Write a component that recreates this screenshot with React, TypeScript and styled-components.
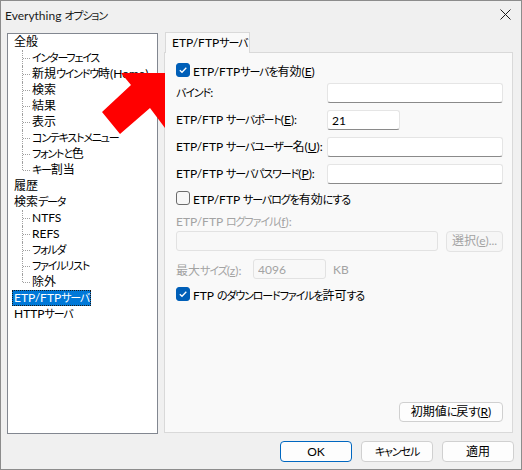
import styled, { createGlobalStyle } from 'styled-components';

const GlobalStyle = createGlobalStyle`
  html, body { margin: 0; padding: 0; background: #f0f0f0; }
  * { box-sizing: border-box; }
`;

const UI_FONT = `Lato, "Noto Sans CJK JP", sans-serif`;

const Window = styled.div`
  position: relative;
  width: 522px;
  height: 470px;
  background: #f0f0f0;
  border: 1px solid #8c8c8c;
  display: flex;
  flex-direction: column;
  font-family: ${UI_FONT};
  font-feature-settings: 'palt';
  font-size: 12px;
  color: #000;
  overflow: hidden;
`;

const TitleBar = styled.div`
  height: 31px;
  display: flex;
  align-items: center;
  justify-content: space-between;
  padding: 0 10px 4px 4px;
  font-size: 12px;
  color: #1a1a1a;
`;

const Main = styled.div`
  display: flex;
  height: 402px;
  padding-left: 6px;
  gap: 6px;
`;

const Tree = styled.div`
  margin-top: 1px;
  width: 151px;
  height: 401px;
  background: #fff;
  border: 1px solid #828790;
  padding: 0 0 0 4px;
  font-size: 12px;
  line-height: 16px;
`;

const TreeRow = styled.div`
  height: 16px;
  display: flex;
  align-items: center;
`;

const TreeLabel = styled.span<{ $selected?: boolean }>`
  display: inline-block;
  height: 16px;
  line-height: 16px;
  padding: 0 2px;
  white-space: nowrap;
  background: ${({ $selected }) => ($selected ? '#0078d7' : 'transparent')};
  color: ${({ $selected }) => ($selected ? '#fff' : '#000')};
  outline: ${({ $selected }) => ($selected ? '1px dotted #1a1a1a' : 'none')};
  outline-offset: -1px;
`;

const ChildRow = styled.div<{ $last?: boolean }>`
  position: relative;
  height: 16px;
  padding-left: 18px;
  display: flex;
  align-items: center;

  &::before {
    content: '';
    position: absolute;
    left: 10px;
    top: 0;
    height: ${({ $last }) => ($last ? '8px' : '16px')};
    border-left: 1px dotted #a0a0a0;
  }

  &::after {
    content: '';
    position: absolute;
    left: 11px;
    top: 8px;
    width: 7px;
    border-top: 1px dotted #a0a0a0;
  }
`;

const TabArea = styled.div`
  width: 349px;
  display: flex;
  flex-direction: column;
`;

const TabStrip = styled.div`
  height: 20px;
  display: flex;
  position: relative;
  z-index: 1;
`;

const Tab = styled.div`
  margin-left: 1px;
  width: 85px;
  height: 21px;
  background: #f9f9f9;
  border: 1px solid #d9d9d9;
  border-bottom: none;
  padding: 2px 0 0 6px;
  font-size: 12px;
  line-height: 16px;
  white-space: nowrap;
`;

const Panel = styled.div`
  height: 381px;
  background: #f9f9f9;
  border: 1px solid #d9d9d9;
  display: flex;
  flex-direction: column;
  padding: 0 9px 10px 11px;
`;

const CheckRow = styled.label<{ $mt: number }>`
  display: flex;
  align-items: center;
  gap: 3px;
  height: 14px;
  margin-top: ${({ $mt }) => $mt}px;
  white-space: nowrap;
`;

const Box = styled.span<{ $checked: boolean }>`
  width: 14px;
  height: 14px;
  border-radius: 3px;
  display: flex;
  align-items: center;
  justify-content: center;
  background: ${({ $checked }) => ($checked ? '#005fb8' : '#f7f7f7')};
  border: 1px solid ${({ $checked }) => ($checked ? '#005fb8' : '#6b6b6b')};
`;

const FieldRow = styled.div<{ $mt: number }>`
  display: grid;
  grid-template-columns: 151px auto;
  align-items: center;
  height: 20px;
  margin-top: ${({ $mt }) => $mt}px;
  white-space: nowrap;
`;

const Label = styled.div<{ $disabled?: boolean; $mt?: number }>`
  height: 16px;
  line-height: 16px;
  margin-top: ${({ $mt }) => $mt ?? 0}px;
  color: ${({ $disabled }) => ($disabled ? '#a3a3a3' : '#000')};
  white-space: nowrap;
`;

const TextBox = styled.input<{ $width?: number }>`
  width: ${({ $width }) => ($width ? `${$width}px` : '100%')};
  height: 20px;
  background: ${({ disabled }) => (disabled ? '#f8f8f8' : '#fff')};
  border: 1px solid ${({ disabled }) => (disabled ? '#e2e2e2' : '#e5e5e5')};
  border-bottom-color: ${({ disabled }) => (disabled ? '#e2e2e2' : '#8a8a8a')};
  border-radius: 3px;
  padding: 0 4px;
  font-family: ${UI_FONT};
  font-size: 12px;
  color: ${({ disabled }) => (disabled ? '#a3a3a3' : '#000')};
  outline: none;
`;

const FileRow = styled.div<{ $mt: number }>`
  display: flex;
  align-items: center;
  gap: 8px;
  height: 20px;
  margin-top: ${({ $mt }) => $mt}px;
`;

const SizeRow = styled.div<{ $mt: number }>`
  display: grid;
  grid-template-columns: 77px 73px auto;
  align-items: center;
  height: 20px;
  margin-top: ${({ $mt }) => $mt}px;
  color: #a3a3a3;
  white-space: nowrap;
`;

const Unit = styled.span`
  padding-left: 7px;
`;

const Button = styled.button<{ $primary?: boolean; $width?: number }>`
  width: ${({ $width }) => $width ?? 72}px;
  height: 21px;
  padding: 0;
  border-radius: 4px;
  font-family: ${UI_FONT};
  font-feature-settings: 'palt';
  font-size: 12px;
  line-height: 16px;
  white-space: nowrap;
  background: ${({ disabled }) => (disabled ? '#f6f6f6' : '#fdfdfd')};
  color: ${({ disabled }) => (disabled ? '#a3a3a3' : '#000')};
  border: 1px solid
    ${({ $primary, disabled }) => ($primary ? '#0067c0' : disabled ? '#e3e3e3' : '#d0d0d0')};
`;

const ResetButton = styled(Button)`
  margin-top: auto;
  align-self: flex-end;
  height: 20px;
`;

const Footer = styled.div`
  display: flex;
  justify-content: flex-end;
  gap: 9px;
  padding: 7px 7px 0 0;
`;

const Acc = styled.span`
  text-decoration: underline;
  text-underline-offset: 1px;
`;

// kana in the Windows UI fonts are set narrower than full width
const Kana = styled.span<{ $tight: number }>`
  font-size: 11px;
  letter-spacing: ${({ $tight }) => -$tight}px;
`;

const ArrowOverlay = styled.svg`
  position: absolute;
  left: -1px;
  top: -1px;
  pointer-events: none;
`;

// "&X" marks an underlined access key
function T({ s, tight = 1.1 }: { s: string; tight?: number }) {
  const parts = s.split(/(&.|[\u3040-\u30ff]+)/).filter(Boolean);
  return (
    <>
      {parts.map((p, i) =>
        p[0] === '&' ? (
          <Acc key={i}>{p[1]}</Acc>
        ) : /[\u3040-\u30ff]/.test(p) ? (
          <Kana key={i} $tight={tight}>
            {p}
          </Kana>
        ) : (
          <span key={i}>{p}</span>
        ),
      )}
    </>
  );
}

type Node = { label: string; children?: string[]; selected?: boolean };

const tree: Node[] = [
  {
    label: '全般',
    children: [
      'インターフェイス',
      '新規ウインドウ時(Home)',
      '検索',
      '結果',
      '表示',
      'コンテキストメニュー',
      'フォントと色',
      'キー割当',
    ],
  },
  { label: '履歴' },
  { label: '検索データ', children: ['NTFS', 'REFS', 'フォルダ', 'ファイルリスト', '除外'] },
  { label: 'ETP/FTPサーバ', selected: true },
  { label: 'HTTPサーバ' },
];

function Check({ checked }: { checked: boolean }) {
  return (
    <Box $checked={checked}>
      {checked && (
        <svg width="10" height="10" viewBox="0 0 10 10">
          <path d="M1.8 5.2 L4 7.3 L8.3 2.8" fill="none" stroke="#fff" strokeWidth="1.3" />
        </svg>
      )}
    </Box>
  );
}

export default function App() {
  return (
    <>
      <GlobalStyle />
      <Window>
        <TitleBar>
          <span>
            <T s="Everything オプション" tight={1.2} />
          </span>
          <svg width="11" height="11" viewBox="0 0 11 11">
            <path d="M0.5 0.5 L10.5 10.5 M10.5 0.5 L0.5 10.5" stroke="#1a1a1a" strokeWidth="1" />
          </svg>
        </TitleBar>

        <Main>
          <Tree>
            {tree.map((node) => (
              <div key={node.label}>
                <TreeRow>
                  <TreeLabel $selected={node.selected}>
                    <T s={node.label} tight={1.2} />
                  </TreeLabel>
                </TreeRow>
                {node.children?.map((child, i) => (
                  <ChildRow key={child} $last={i === node.children!.length - 1}>
                    <TreeLabel>
                      <T s={child} tight={1.2} />
                    </TreeLabel>
                  </ChildRow>
                ))}
              </div>
            ))}
          </Tree>

          <TabArea>
            <TabStrip>
              <Tab>
                <T s="ETP/FTPサーバ" />
              </Tab>
            </TabStrip>
            <Panel>
              <CheckRow $mt={10}>
                <Check checked />
                <span>
                  <T s="ETP/FTPサーバを有効(&E)" />
                </span>
              </CheckRow>

              <FieldRow $mt={6}>
                <Label>
                  <T s="バインド:" />
                </Label>
                <TextBox readOnly value="" />
              </FieldRow>
              <FieldRow $mt={7}>
                <Label>
                  <T s="ETP/FTP サーバポート(&E):" />
                </Label>
                <TextBox readOnly value="21" $width={73} />
              </FieldRow>
              <FieldRow $mt={7}>
                <Label>
                  <T s="ETP/FTP サーバユーザー名(&U):" />
                </Label>
                <TextBox readOnly value="" />
              </FieldRow>
              <FieldRow $mt={7}>
                <Label>
                  <T s="ETP/FTP サーバパスワード(&P):" />
                </Label>
                <TextBox readOnly value="" />
              </FieldRow>

              <CheckRow $mt={7}>
                <Check checked={false} />
                <span>
                  <T s="ETP/FTP サーバログを有効にする" />
                </span>
              </CheckRow>

              <Label $disabled $mt={9}>
                <T s="ETP/FTP ログファイル(&f):" />
              </Label>
              <FileRow $mt={1}>
                <TextBox disabled value="" />
                <Button disabled $width={71}>
                  <T s="選択(&e)..." />
                </Button>
              </FileRow>

              <SizeRow $mt={8}>
                <span>
                  <T s="最大サイズ(&z):" />
                </span>
                <TextBox disabled value="4096" $width={73} />
                <Unit>KB</Unit>
              </SizeRow>

              <CheckRow $mt={8}>
                <Check checked />
                <span>
                  <T s="FTP のダウンロードファイルを許可する" />
                </span>
              </CheckRow>

              <ResetButton $width={104}>
                <T s="初期値に戻す(&R)" />
              </ResetButton>
            </Panel>
          </TabArea>
        </Main>

        <Footer>
          <Button $primary>OK</Button>
          <Button>
            <T s="キャンセル" />
          </Button>
          <Button>
            <T s="適用" />
          </Button>
        </Footer>

        <ArrowOverlay width="522" height="470" viewBox="0 0 522 470">
          <polygon
            points="121,73 165,73 165,128 150,108 120,134 102,112 131,85"
            fill="#ff0000"
          />
        </ArrowOverlay>
      </Window>
    </>
  );
}
